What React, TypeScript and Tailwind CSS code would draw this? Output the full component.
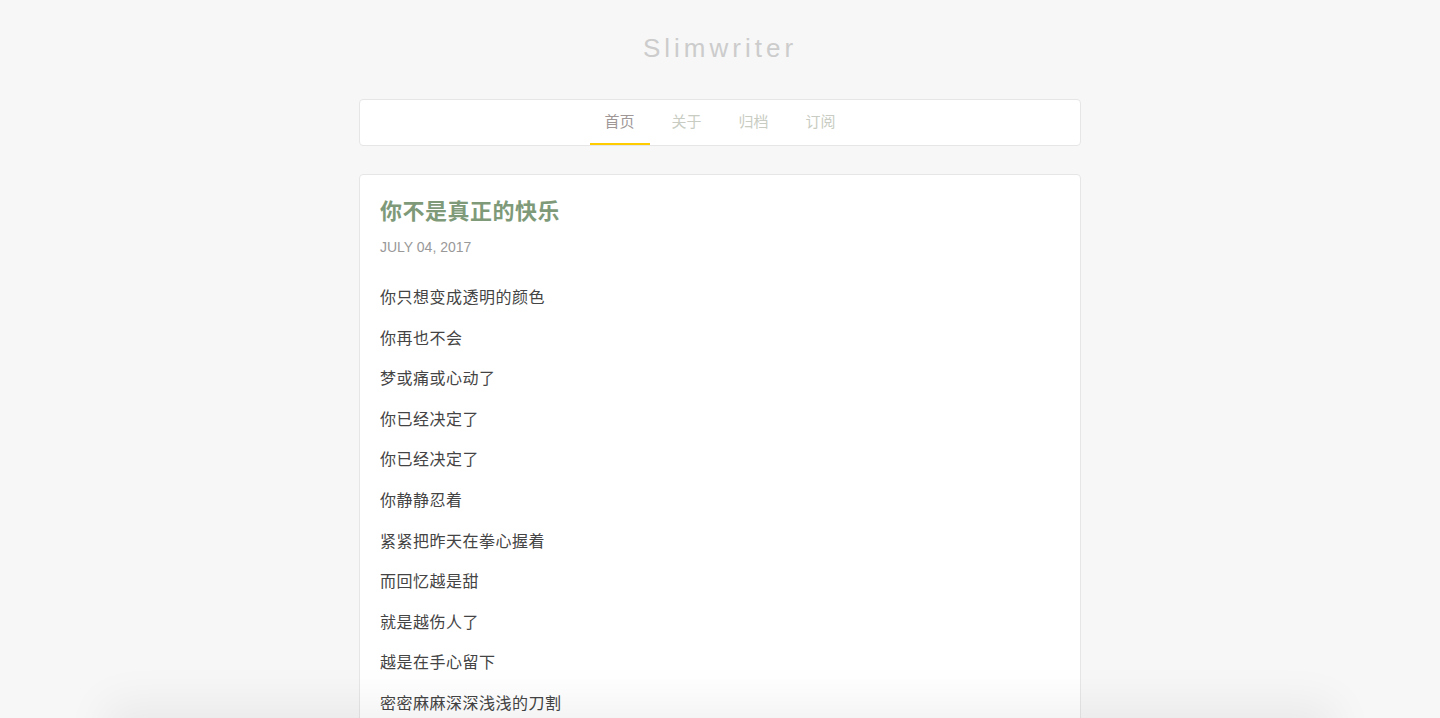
import React from "react";

const lines = [
  "你只想变成透明的颜色",
  "你再也不会",
  "梦或痛或心动了",
  "你已经决定了",
  "你已经决定了",
  "你静静忍着",
  "紧紧把昨天在拳心握着",
  "而回忆越是甜",
  "就是越伤人了",
  "越是在手心留下",
  "密密麻麻深深浅浅的刀割",
  "你不是真正的快乐",
  "你的笑只是你穿的保护色",
];

const nav = ["首页", "关于", "归档", "订阅"];

export default function App() {
  return (
    <div
      className="min-h-screen bg-[#f7f7f7] pb-10"
      style={{ fontFamily: '"Liberation Sans", "Noto Sans CJK SC", sans-serif' }}
    >
      <header className="pt-[30px] pb-[33px] text-center">
        <h1 className="text-[26px] leading-[36px] tracking-[4px] text-[#cccccc] font-normal">
          Slimwriter
        </h1>
      </header>
      <div className="mx-auto w-[722px]">
        <nav className="h-[47px] bg-white border border-[#e6e6e6] rounded-[4px] flex justify-center gap-[7px]">
          {nav.map((n, i) => (
            <a
              key={n}
              className={
                "relative h-[45px] w-[60px] flex items-center justify-center text-[15px] " +
                (i === 0 ? "text-[#a09797]" : "text-[#c8ccc2]")
              }
            >
              {n}
              {i === 0 && (
                <span className="absolute left-0 right-0 bottom-0 h-[2px] bg-[#ffcc00]" />
              )}
            </a>
          ))}
        </nav>
        <article className="mt-[28px] bg-white border border-[#e6e6e6] rounded-[4px] px-[20px] pt-[22px] pb-[20px]">
          <h2 className="text-[22px] leading-[30px] font-bold tracking-[0.5px] text-[#7e9a79]">你不是真正的快乐</h2>
          <div className="mt-[11px] text-[14px] leading-[18px] text-[#999999]">JULY 04, 2017</div>
          <div className="mt-[29px]">
            {lines.map((l, i) => (
              <p key={i} className="text-[16px] leading-[25.6px] mb-[15px] tracking-[0.5px] text-[#444444]">
                {l}
              </p>
            ))}
          </div>
        </article>
      </div>
      <div className="fixed left-[120px] right-[120px] bottom-[-60px] h-[60px] bg-[#eeeeee] shadow-[0_0_45px_15px_rgba(0,0,0,0.06)] pointer-events-none" />
    </div>
  );
}
